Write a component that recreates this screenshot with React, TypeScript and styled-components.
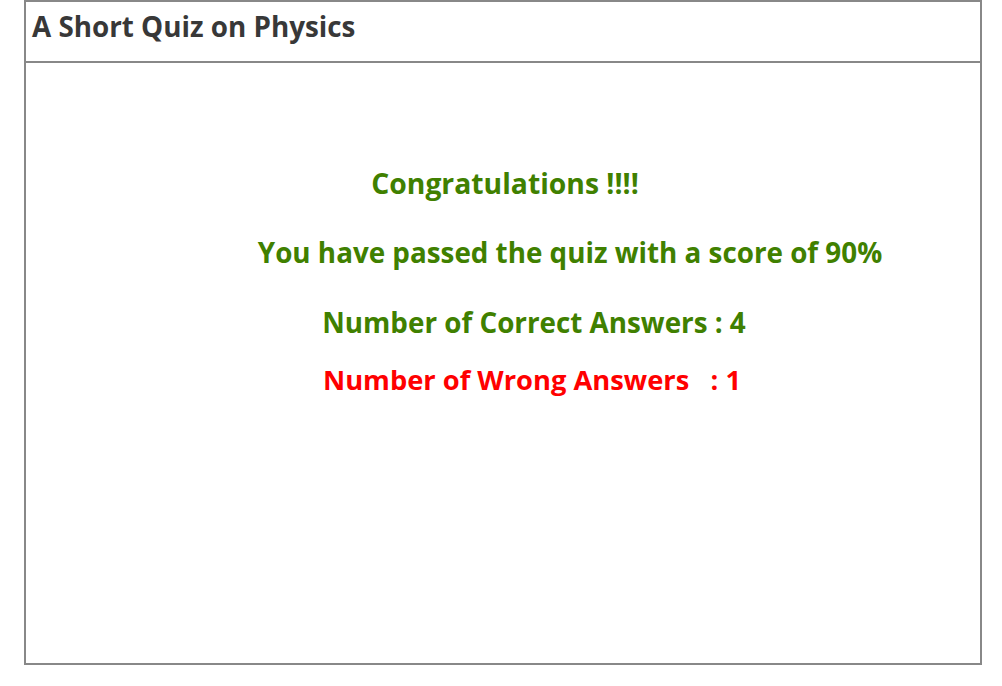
import React from "react";
import styled, { createGlobalStyle } from "styled-components";

const Global = createGlobalStyle`
  html, body { margin: 0; padding: 0; background: #ffffff; }
  body { font-family: "Open Sans", Lato, sans-serif; }
`;

const Page = styled.div`
  padding: 0 20px 0 24px;
  width: 958px;
`;

const Card = styled.section`
  box-sizing: border-box;
  width: 958px;
  height: 665px;
  border: 2px solid #888888;
  display: flex;
  flex-direction: column;
`;

const Header = styled.header`
  height: 61px;
  border-bottom: 2px solid #888888;
  display: flex;
  align-items: flex-start;
  padding: 7px 0 0 6px;
  box-sizing: border-box;
`;

const Title = styled.h1`
  margin: 0;
  font-size: 27.8px;
  font-weight: 700;
  color: #383838;
  line-height: 34px;
`;

const Body = styled.div`
  flex: 1;
  display: flex;
  flex-direction: column;
  padding-top: 103px;
`;

const Line = styled.p<{ $color: string; $shift: number; $gap: number; $size: number }>`
  margin: ${(p) => p.$gap}px 0 0 0;
  padding-left: ${(p) => p.$shift * 2}px;
  text-align: center;
  font-size: ${(p) => p.$size}px;
  line-height: 34px;
  font-weight: 700;
  color: ${(p) => p.$color};
  white-space: pre;
`;

const GREEN = "#408000";
const RED = "#ff0000";

export default function App() {
  return (
    <Page>
      <Global />
      <Card>
        <Header>
          <Title>A Short Quiz on Physics</Title>
        </Header>
        <Body>
          <Line $color={GREEN} $shift={2} $gap={0} $size={28.3}>Congratulations !!!!</Line>
          <Line $color={GREEN} $shift={67} $gap={35} $size={27.8}>You have passed the quiz with a score of 90%</Line>
          <Line $color={GREEN} $shift={31} $gap={36} $size={27.8}>Number of Correct Answers : 4</Line>
          <Line $color={RED} $shift={29} $gap={24} $size={27.3}>Number of Wrong Answers   : 1</Line>
        </Body>
      </Card>
    </Page>
  );
}
